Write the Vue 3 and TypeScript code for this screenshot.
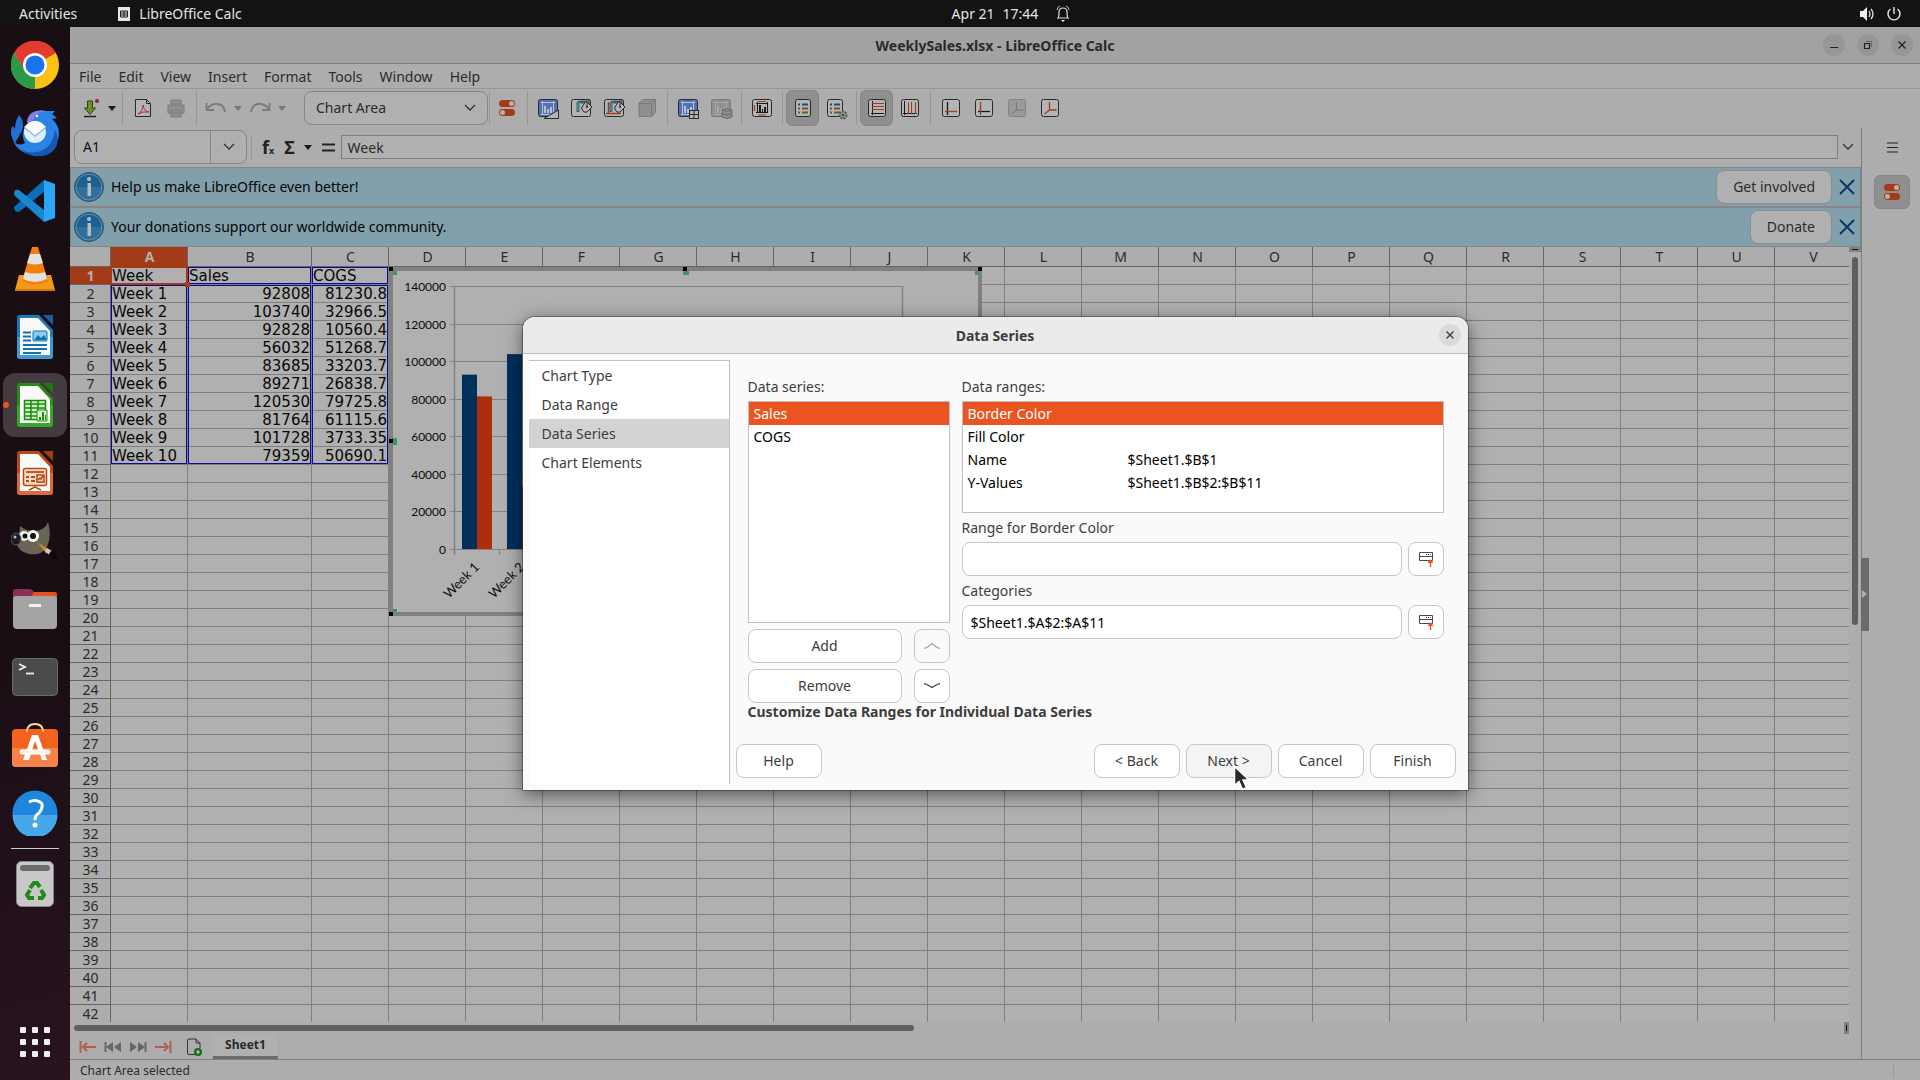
<script setup lang="ts">
import { ref } from 'vue'

interface Tool { name: string; art: string; active?: boolean }

const menus = ['File', 'Edit', 'View', 'Insert', 'Format', 'Tools', 'Window', 'Help']

const page = (x: number, w: number, fill = '#b4b4b4', stroke = '#2a2a2a') =>
  `<rect x="${x}.5" y="3.5" width="${w}" height="17" rx="2" fill="${fill}" stroke="${stroke}"/>`
const chartBars = (c: string) =>
  `<path d="M5 6.5h14M6.5 5v14M17.5 5v14M5 18.5h14" stroke="${c}" fill="none"/><path d="M8 10h2v7h-2zM11 13h2v4h-2zM14 11h2v6h-2z" fill="${c}"/>`
const bucket =
  '<path d="M9 16V8q0-2 3-2h4" fill="none" stroke="#33606f" stroke-width="3"/><path d="M9 15V8q0-1 3-1" fill="none" stroke="#6fa3b5"/><path d="M17 5l6 6-5 5q-2 1-4-1t-1-4z" fill="#b4b4b4" stroke="#2a2a2a"/><path d="M18 11V4q1-2 2 0v4" fill="none" stroke="#2a2a2a"/><circle cx="18" cy="11" r="1" fill="#2a2a2a"/>'
const listRows = (x: number) =>
  `<path d="M${x} 8.5h2m2 0h6" stroke="#0d4f8b" stroke-width="2"/><path d="M${x} 12.5h2m2 0h6" stroke="#a33a18" stroke-width="2"/><path d="M${x} 16.5h2m2 0h6" stroke="#2f7a18" stroke-width="2"/>`

const toolGroups: Tool[][] = [
  [
    { name: 'Chart Type', art: page(2, 19, '#5670b4', '#2a2a2a') + chartBars('#b8c0d4') + '<path d="M8 22.5L22.5 14v8.5z" fill="#b4b4b4" stroke="#2a2a2a"/>' },
    { name: 'Chart Area', art: page(2, 19) + bucket },
    { name: 'Chart Wall', art: page(2, 19) + '<path d="M6.5 6v12M4 17.5h15" stroke="#a33a18" stroke-width="1.5" fill="none"/>' + bucket },
    { name: '3D View', art: '<path d="M4 7l4-3.5h12.5V16L17 20.5H4z" fill="#8f8f8f" stroke="#7a7a7a"/><path d="M4 7.5h12.5V20M16.5 7.5l4-4" fill="none" stroke="#7a7a7a"/>' },
  ],
  [
    { name: 'Data Ranges', art: page(2, 19, '#5670b4') + chartBars('#b8c0d4') + '<rect x="13.5" y="14.5" width="9" height="8" fill="#b4b4b4" stroke="#2a2a2a"/><path d="M13 18.5h10M18 14v9" stroke="#2a2a2a"/>' },
    { name: 'Data Table', art: page(2, 19, '#8f8f8f', '#7a7a7a') + chartBars('#a8a8a8') + '<path d="M13 14q5-3 10 0v7q-5 3-10 0z" fill="#8f8f8f" stroke="#6c6c6c"/><path d="M13 14q5 3 10 0M13 17.5q5 3 10 0" fill="none" stroke="#6c6c6c"/>' },
  ],
  [
    { name: 'Titles', art: page(2, 19) + '<path d="M8 5.5h8M8 19h8M4.5 9v6" stroke="#a33a18" stroke-width="1.2" fill="none"/><path d="M6 7.5h12M7.5 6v11M17.5 6v11M6 16.500h12" stroke="#1a1a1a" fill="none"/><path d="M9 9h2v7H9zM12 13h1v3h-1zM14 11h2v5h-2z" fill="#1a1a1a"/>' },
  ],
  [
    { name: 'Legend', active: true, art: page(4, 15) + listRows(7) },
    { name: 'Insert Legend', art: page(3, 15) + listRows(6) + '<circle cx="19" cy="19" r="3.5" fill="#8f8f8f" stroke="#5a5a5a" stroke-width="2" stroke-dasharray="2 1"/><circle cx="19" cy="19" r="1" fill="#2a2a2a"/>' },
  ],
  [
    { name: 'Horizontal Grids', active: true, art: page(3, 17) + '<path d="M7.5 5v14M6 17.5h13" stroke="#1a1a1a" fill="none"/><path d="M7 7.5h12M7 10.5h12M7 13.5h12" stroke="#a33a18"/>' },
    { name: 'Vertical Grids', art: page(3, 17) + '<path d="M6.5 5v14M5 17.5h14" stroke="#1a1a1a" fill="none"/><path d="M10.5 6v12M13.5 6v12M17.5 6v12" stroke="#a33a18"/>' },
  ],
  [
    { name: 'X Axis', art: page(3, 17) + '<path d="M8.5 6v13" stroke="#1a1a1a" stroke-width="1.3"/><path d="M6 15.5h12" stroke="#a33a18" stroke-width="1.3"/>' },
    { name: 'Y Axis', art: page(3, 17) + '<path d="M6 15.5h12" stroke="#1a1a1a" stroke-width="1.3"/><path d="M8.5 6v13" stroke="#a33a18" stroke-width="1.3"/>' },
    { name: 'Z Axis', art: page(3, 17, '#999', '#828282') + '<path d="M11.5 6v8h7M11.5 14l-5 4" stroke="#787878" fill="none"/>' },
    { name: 'All Axes', art: page(3, 17) + '<path d="M11.5 6v8h7M11.5 14l-5 4" stroke="#a33a18" fill="none" stroke-width="1.3"/>' },
  ],
]

const columns = 'ABCDEFGHIJKLMNOPQRSTUV'.split('')
const weekly: [string, string, string][] = [
  ['Week', 'Sales', 'COGS'],
  ['Week 1', '92808', '81230.8'],
  ['Week 2', '103740', '32966.5'],
  ['Week 3', '92828', '10560.4'],
  ['Week 4', '56032', '51268.7'],
  ['Week 5', '83685', '33203.7'],
  ['Week 6', '89271', '26838.7'],
  ['Week 7', '120530', '79725.8'],
  ['Week 8', '81764', '61115.6'],
  ['Week 9', '101728', '3733.35'],
  ['Week 10', '79359', '50690.1'],
]
const cell = (row: number, col: number) => (col < 3 ? weekly[row - 1]?.[col] ?? '' : '')

const base = 278
const plotHeight = 263
const valueY = (v: number) => base - (v / 140000) * plotHeight
const bars = weekly.slice(1).map((r, i) => ({
  label: r[0], x: 73 + i * 45, sales: valueY(Number(r[1])), cogs: valueY(Number(r[2])),
}))
const axis = [0, 20000, 40000, 60000, 80000, 100000, 120000, 140000]

const steps = ['Chart Type', 'Data Range', 'Data Series', 'Chart Elements']
const ranges = [
  ['Border Color', ''],
  ['Fill Color', ''],
  ['Name', '$Sheet1.$B$1'],
  ['Y-Values', '$Sheet1.$B$2:$B$11'],
]

const formula = ref('Week')
const nameBox = ref('A1')
const borderRange = ref('')
const categories = ref('$Sheet1.$A$2:$A$11')
</script>

<template>
  <div class="desktop">
    <header class="topbar">
      <div class="tb-left">
        <button class="plain">Activities</button>
        <button class="plain app">
          <svg width="14" height="16" viewBox="0 0 14 16"><path d="M1 1h12v14H1z" fill="#e6e6e6" /><path d="M3.500 5h7v6h-7zM3.500 7h7M3.500 9h7M7 5v6" fill="none" stroke="#222" /></svg>
          LibreOffice Calc
        </button>
      </div>
      <div class="tb-mid">
        <span>Apr 21</span><span>17:44</span>
        <svg width="14" height="18" viewBox="0 0 14 18"><path d="M2 13q1-1 1-6 0-4 4-4t4 4q0 5 1 6z" fill="none" stroke="#ddd" stroke-width="1.200" /><path d="M1 5q0-3 3-4M13 5q0-3-3-4" fill="none" stroke="#bbb" /><path d="M5 15h4l-2 2z" fill="#eee" /></svg>
      </div>
      <div class="tb-right">
        <svg width="16" height="16" viewBox="0 0 16 16"><path d="M1 5h3l4-4v14l-4-4H1z" fill="#f0f0f0" /><path d="M10 5q2 3 0 6M12 3q4 5 0 10" fill="none" stroke="#e0e0e0" stroke-width="1.300" /></svg>
        <svg width="16" height="16" viewBox="0 0 16 16"><path d="M8 1v7M4.500 3a6 6 0 1 0 7 0" fill="none" stroke="#e8e8e8" stroke-width="1.400" /></svg>
      </div>
    </header>

    <div class="below">
      <nav class="dock" aria-label="Dock">
        <button class="slot" aria-label="Chrome">
          <svg width="48" height="48" viewBox="0 0 48 48"><circle cx="24" cy="24" r="24" fill="#fbc116" /><path d="M24 24L3.200 12A24 24 0 0 1 44.800 12z" fill="#e33b2e" /><path d="M24 12h20.800A24 24 0 0 0 3.200 12L13 29z" fill="#e33b2e" /><path d="M3.200 12L14 30l11 5-1 13A24 24 0 0 1 3.200 12z" fill="#2a9a48" /><path d="M24 48l10.400-18L24 35z" fill="#fbc116" /><circle cx="24" cy="24" r="12" fill="#fff" /><circle cx="24" cy="24" r="9.500" fill="#1a73e8" /></svg>
        </button>
        <button class="slot" aria-label="Thunderbird">
          <svg width="48" height="48" viewBox="0 0 48 48"><path d="M8 6C12 10 13 16 11 22L4 34C-2 26 0 18 2 17l2 3Q4 12 8 6z" fill="#2270d2" /><path d="M16 14C16 4 24 0 34 2h10l-3 3 5 4-5 1q7 6 7 15A24 23 0 0 1 2 32Q8 38 14 34 8 22 18 14z" fill="#2b83ea" /><path d="M2 30Q10 46 26 43 42 40 44 20q8 18-8 26Q14 52 2 30z" fill="#1657b0" /><path d="M16 14C17 3 26 0 36 2q-11 1-14 9z" fill="#8d7be8" /><circle cx="24" cy="23" r="11" fill="#dff0ff" /><path d="M13 18q11-12 22 0l-11 9z" fill="#fff" /><path d="M14 19l10 8 10-8" fill="none" stroke="#8bbfe8" stroke-width="1.500" /><circle cx="26" cy="7" r="1.200" fill="#fff" /></svg>
        </button>
        <button class="slot" aria-label="Visual Studio Code">
          <svg width="44" height="44" viewBox="0 0 44 44"><path d="M1 28L31 1v12L6 33q-5 0-5-5z" fill="#0a6fb8" /><path d="M1 15q0-5 5-4l25 20v12L2 17z" fill="#1687d0" /><path d="M31 1l11 4v34l-11 4z" fill="#2ba5f4" /></svg>
        </button>
        <button class="slot" aria-label="VLC">
          <svg width="42" height="48" viewBox="0 0 42 48"><path d="M5 30h32l4 15H1z" fill="#f39a1b" /><path d="M1 44h40v2H1z" fill="#d97706" /><path d="M18 2h6l10 34q-13 7-26 0z" fill="#f47d0b" /><path d="M16 9h10l3 9q-8 3-16 0zM11 27q10 3 20 0l2 7q-12 6-24 0z" fill="#e2e2e2" /></svg>
        </button>
        <button class="slot" aria-label="LibreOffice Writer">
          <svg width="38" height="46" viewBox="0 0 38 46"><path d="M4 1h19l14 15v26q0 3-3 3H4q-3 0-3-3V4q0-3 3-3z" fill="#1a7bb8" /><path d="M1 23h36v19q0 3-3 3H4q-3 0-3-3z" fill="#3e9bd0" /><path d="M4 4h18l12 13v24H4z" fill="#fafafa" /><path d="M27 1h10v10z" fill="#12639a" /><path d="M7 18.500h8M7 22.500h8M7 26.500h8M7 31h24M7 35h24M7 39h18" stroke="#0f73b0" stroke-width="2" /><rect x="17" y="17" width="14" height="10" rx="1" fill="#8ccaf0" stroke="#0f73b0" /><path d="M18 26l4-5 3 3 3-3 3 5z" fill="#0f73b0" /></svg>
        </button>
        <button class="slot current" aria-label="LibreOffice Calc">
          <i class="dot"></i>
          <svg width="38" height="46" viewBox="0 0 38 46"><path d="M4 1h19l14 15v26q0 3-3 3H4q-3 0-3-3V4q0-3 3-3z" fill="#258e14" /><path d="M1 23h36v19q0 3-3 3H4q-3 0-3-3z" fill="#35a825" /><path d="M4 4h18l12 13v24H4z" fill="#fafafa" /><path d="M27 1h10v10z" fill="#1c7a0c" /><path d="M8 18h22v20H8z" fill="#ccf0c0" /><path d="M8.500 18.500h21v19h-21zM8 22h22M8 26h22M8 30h22M8 34h22M15 18v20M22 18v20" fill="none" stroke="#1f8a10" stroke-width="1.500" /><path d="M21 28h10v11H21z" fill="#d8f4d0" stroke="#1f8a10" /><path d="M23 35h2v3h-2zM26 30h2v8h-2zM29 33h1v5h-1z" fill="#1f8a10" /></svg>
        </button>
        <button class="slot" aria-label="LibreOffice Impress">
          <svg width="38" height="46" viewBox="0 0 38 46"><path d="M4 1h19l14 15v26q0 3-3 3H4q-3 0-3-3V4q0-3 3-3z" fill="#bb4a10" /><path d="M1 23h36v19q0 3-3 3H4q-3 0-3-3z" fill="#dd6b35" /><path d="M4 4h18l12 13v24H4z" fill="#fafafa" /><path d="M27 1h10v10z" fill="#a53d08" /><rect x="7.500" y="18.500" width="23" height="17" rx="2" fill="#fbdccb" stroke="#b04a14" stroke-width="1.500" /><path d="M10 22h18" stroke="#c85a20" stroke-width="2" /><path d="M10 27h3m2 0h4M10 31h3m2 0h4" stroke="#b04a14" stroke-width="2" /><path d="M21 25h7v7h-7zM22 30l2-2 1 1 2-3M19 36v2M13 40l6-3 6 3" fill="none" stroke="#b04a14" stroke-width="1.500" /></svg>
        </button>
        <button class="slot" aria-label="GIMP">
          <svg width="48" height="40" viewBox="0 0 48 40"><path d="M9 5q7 6 16 5Q34 9 37 1q4 14-1 25-6 9-18 7Q7 31 4 19q5-3 5-14z" fill="#6b6556" /><circle cx="13" cy="15" r="5" fill="#eee" /><circle cx="22" cy="15" r="6" fill="#f4f4f4" /><circle cx="14" cy="15" r="2.500" fill="#111" /><circle cx="22" cy="15" r="3" fill="#111" /><ellipse cx="5" cy="18" rx="5" ry="6" fill="#1a1d22" stroke="#555c66" /><circle cx="4" cy="16" r="1.500" fill="#b8c0cc" /><path d="M27 22l10 6-2 4z" fill="#ea8a1b" /><path d="M36 27l5 3-2 4-5-3z" fill="#c8c8c8" /><path d="M40 30q8 2 7 9-6 0-9-6z" fill="#0a0a0a" /></svg>
        </button>
        <button class="slot" aria-label="Files">
          <svg width="46" height="42" viewBox="0 0 46 42"><path d="M1 12V4q0-3 3-3h14q2 0 4 3h20q3 0 3 3v6z" fill="#8a2f55" /><path d="M22 4h20q3 0 3 3v6H16z" fill="#e4531f" /><path d="M4 8h38q3 0 3 3v26q0 4-4 4H5q-4 0-4-4V11q0-3 3-3z" fill="#a4a4a4" /><path d="M17 16h12v3H17z" fill="#f4f4f4" /></svg>
        </button>
        <button class="slot" aria-label="Terminal">
          <svg width="46" height="38" viewBox="0 0 46 38"><rect x=".5" y=".5" width="45" height="37" rx="4" fill="#4b4b4b" stroke="#6a6a6a" /><path d="M7 6l6 3-6 3" fill="none" stroke="#eee" stroke-width="1.800" /><path d="M14 15.500h8" stroke="#eee" stroke-width="1.800" /></svg>
        </button>
        <button class="slot" aria-label="Ubuntu Software">
          <svg width="46" height="46" viewBox="0 0 46 46"><path d="M15 10q0-8 8-8t8 8" fill="none" stroke="#f5d9a0" stroke-width="2" /><rect y="7" width="46" height="38" rx="4" fill="#f4621f" /><path d="M0 26h46v15q0 4-4 4H4q-4 0-4-4z" fill="#f6834a" /><path d="M15 7v3M31 7v3" stroke="#f5d9a0" stroke-width="1.500" /><path d="M20 13h6l9 25h-5l-7-19-6 19h-6z" fill="#fff" /><path d="M10 30h26" stroke="#fff" stroke-width="5" stroke-linecap="round" /><path d="M10 30h26" stroke="#ffd9c8" /></svg>
        </button>
        <button class="slot" aria-label="Help">
          <svg width="46" height="46" viewBox="0 0 46 46"><circle cx="23" cy="23" r="22.500" fill="#1e86dc" /><path d="M.5 25h45A22.500 22.500 0 0 1 .5 25z" fill="#46a8e8" /><path d="M17 12q6-3 11 0t-1 11q-4 2-4 7" fill="none" stroke="#fff" stroke-width="3" /><circle cx="23" cy="35" r="2.500" fill="#fff" /></svg>
        </button>
        <hr />
        <button class="slot" aria-label="Trash">
          <svg width="38" height="46" viewBox="0 0 38 46"><rect x=".5" y=".5" width="37" height="45" rx="5" fill="#c8c8c8" stroke="#888" /><rect x="4" y="4" width="30" height="6" rx="3" fill="#6c6c6c" /><g fill="none" stroke="#218a1c" stroke-width="4"><path d="M14 27l4-5h3l3 4" /><path d="M25 29l3 5-2 3h-4" /><path d="M18 37h-5l-2-3 3-5" /></g></svg>
        </button>
        <button class="slot apps" aria-label="Show Applications">
          <svg width="32" height="32" viewBox="0 0 32 32" fill="#eee"><g v-for="r in 3" :key="r"><rect v-for="c in 3" :key="c" :x="c * 12 - 11" :y="r * 12 - 11" width="6" height="6" rx="1" /></g></svg>
        </button>
      </nav>

      <main class="window">
        <div class="titlebar">
          <h1>WeeklySales.xlsx - LibreOffice Calc</h1>
          <div class="winbtns">
            <button class="round" aria-label="Minimize"><svg width="10" height="10" viewBox="0 0 10 10"><path d="M1 7.500h8" stroke="#222" /></svg></button>
            <button class="round" aria-label="Restore"><svg width="10" height="10" viewBox="0 0 10 10"><path d="M1.500 3.500h5v5h-5z" fill="none" stroke="#222" stroke-width="1.200" /><path d="M3 1.500h5.500V7" fill="none" stroke="#666" /></svg></button>
            <button class="round" aria-label="Close"><svg width="10" height="10" viewBox="0 0 10 10"><path d="M1.500 1.500l7 7m0-7l-7 7" stroke="#222" stroke-width="1.200" /></svg></button>
          </div>
        </div>

        <nav class="menubar"><a v-for="m in menus" :key="m" href="#">{{ m }}</a></nav>

        <div class="toolbar">
          <button class="split" aria-label="Save">
            <svg width="24" height="24" viewBox="0 0 24 24"><path d="M9.500 5h5v7h3L12 18.500 6.500 12h3z" fill="#6d8f24" stroke="#2f4010" /><path d="M6 20.500h12" stroke="#222" stroke-width="1.500" /><circle cx="19" cy="5" r="2" fill="#9c1c2c" /></svg>
            <svg class="tri" width="8" height="5" viewBox="0 0 8 5"><path d="M0 0h8L4 5z" fill="#1a1a1a" /></svg>
          </button>
          <i class="sep"></i>
          <button class="tool" aria-label="Export as PDF"><svg width="24" height="24" viewBox="0 0 24 24"><path d="M4.500 3.500h11l4 4v13h-15z" fill="#b4b4b4" stroke="#2a2a2a" /><path d="M15.500 3.500v4h4" fill="none" stroke="#2a2a2a" /><path d="M7 18q5-3 5-9 1 6 6 7-6-1-11 2z" fill="none" stroke="#b02a3a" /></svg></button>
          <button class="tool" aria-label="Print"><svg width="24" height="24" viewBox="0 0 24 24"><path d="M7 4h10v4H7zM4 9h16v8H4zM7 14h10v7H7z" fill="#8f8f8f" stroke="#7a7a7a" /></svg></button>
          <i class="sep"></i>
          <button v-for="u in ['Undo', 'Redo']" :key="u" class="split" :aria-label="u">
            <svg v-if="u === 'Undo'" width="24" height="24" viewBox="0 0 24 24"><path d="M2.500 7v7H10M3 13q5-6 11-5 6 1 7 8" fill="none" stroke="#7a7a7a" stroke-width="1.800" /></svg>
            <svg v-else width="24" height="24" viewBox="0 0 24 24"><path d="M21.500 7v7H14M21 13q-5-6-11-5-6 1-7 8" fill="none" stroke="#7a7a7a" stroke-width="1.800" /></svg>
            <svg class="tri" width="8" height="5" viewBox="0 0 8 5"><path d="M0 0h8L4 5z" fill="#777" /></svg>
          </button>
          <span class="selwrap">
            <select aria-label="Chart element"><option>Chart Area</option></select>
            <svg width="12" height="8" viewBox="0 0 12 8"><path d="M1 1l5 5 5-5" fill="none" stroke="#333" stroke-width="1.300" /></svg>
          </span>
          <i class="sep tight"></i>
          <button class="tool" aria-label="Format Selection"><svg width="24" height="24" viewBox="0 0 24 24"><rect x="4" y="4" width="16" height="7" rx="3.500" fill="#a33a18" /><circle cx="16.500" cy="7.500" r="2.500" fill="#b8b0ac" /><rect x="4" y="13" width="16" height="7" rx="3.500" fill="#a33a18" /><circle cx="7.500" cy="16.500" r="2.500" fill="#b8b0ac" /></svg></button>
          <template v-for="(g, i) in toolGroups" :key="i">
            <i class="sep"></i>
            <button v-for="t in g" :key="t.name" class="tool" :class="{ on: t.active }" :aria-label="t.name"><svg width="24" height="24" viewBox="0 0 24 24" v-html="t.art"></svg></button>
          </template>
        </div>

        <div class="work">
          <div class="doc">
            <div class="formulabar">
              <div class="namebox">
                <input v-model="nameBox" aria-label="Name Box" />
                <button aria-label="Open name list"><svg width="12" height="8" viewBox="0 0 12 8"><path d="M1 1l5 5 5-5" fill="none" stroke="#333" stroke-width="1.300" /></svg></button>
              </div>
              <i class="vline"></i>
              <button class="fx" aria-label="Function Wizard">f<small>x</small></button>
              <button class="fx sigma" aria-label="Select Function">Σ<svg width="8" height="5" viewBox="0 0 8 5"><path d="M0 0h8L4 5z" fill="#1a1a1a" /></svg></button>
              <button class="fx" aria-label="Formula"><svg width="13" height="9" viewBox="0 0 13 9"><path d="M0 1.500h13M0 7.500h13" stroke="#222" stroke-width="2" /></svg></button>
              <input v-model="formula" class="formula" aria-label="Input line" />
              <button class="expand" aria-label="Expand Formula Bar"><svg width="12" height="8" viewBox="0 0 12 8"><path d="M1 1l5 5 5-5" fill="none" stroke="#333" stroke-width="1.300" /></svg></button>
            </div>

            <div v-for="b in [['Help us make LibreOffice even better!', 'Get involved'], ['Your donations support our worldwide community.', 'Donate']]" :key="b[1]" class="infobar">
              <svg width="30" height="30" viewBox="0 0 30 30"><circle cx="15" cy="15" r="14.500" fill="#1d5f90" stroke="#3f4f58" /><path d="M1.500 15h27a13.500 13.500 0 0 1-27 0z" fill="#2f709d" /><circle cx="15" cy="15" r="13" fill="none" stroke="#5c93b5" /><path d="M13.500 11h3.500v13h-3.500z" fill="#b4bcc2" /><circle cx="15" cy="7" r="2" fill="#b4bcc2" /></svg>
              <span>{{ b[0] }}</span>
              <button class="infobtn">{{ b[1] }}</button>
              <button class="infox" aria-label="Close Infobar"><svg width="16" height="16" viewBox="0 0 16 16"><path d="M1 1l14 14m0-14L1 15" stroke="#083761" stroke-width="2" /></svg></button>
            </div>

            <div class="sheetrow">
              <div class="sheet">
                <table>
                  <colgroup><col class="c-head" /><col v-for="c in columns" :key="c" :class="{ 'c-wide': c === 'B' }" class="c-std" /></colgroup>
                  <thead><tr><th></th><th v-for="c in columns" :key="c" :class="{ hot: c === 'A' }">{{ c }}</th></tr></thead>
                  <tbody>
                    <tr v-for="r in 42" :key="r">
                      <th :class="{ hot: r === 1 }">{{ r }}</th>
                      <td v-for="(c, i) in columns" :key="c" :class="{ num: r > 1 && i > 0 }">{{ cell(r, i) }}</td>
                    </tr>
                  </tbody>
                </table>
                <i class="range ra"></i><i class="range rb"></i><i class="range rc"></i><i class="range hb"></i><i class="range hc"></i>
                <i class="cursorcell"></i>
                <div class="chart">
                  <svg width="585" height="341" viewBox="0 0 585 341">
                    <g stroke="#828282">
                      <path v-for="(a, i) in axis" :key="a" :d="`M57 ${Math.round(valueY(a)) + 0.5}H510`" />
                      <path d="M61.500 15v269M509.500 15v264" stroke-width="1.500" fill="none" />
                      <path v-for="b in bars" :key="b.label" :d="`M${b.x + 33.5} 279v5`" />
                    </g>
                    <g class="axis"><text v-for="a in axis" :key="a" x="53" :y="valueY(a) + 5" text-anchor="end">{{ a }}</text></g>
                    <g v-for="b in bars" :key="b.label">
                      <rect :x="b.x - 4" :y="b.sales" width="15" :height="278 - b.sales" fill="#002f5c" />
                      <rect :x="b.x + 11" :y="b.cogs" width="15" :height="278 - b.cogs" fill="#ae2d0b" />
                      <text class="week" :transform="`translate(${b.x + 14} 297) rotate(-45)`" text-anchor="end">{{ b.label }}</text>
                    </g>
                  </svg>
                  <b class="h h1"></b><b class="h h2"></b><b class="h h3"></b><b class="h h4"></b><b class="h h5"></b>
                </div>
              </div>
              <div class="vscroll"><i class="splitbox"></i><i class="vthumb"></i></div>
            </div>

            <div class="hscroll"><i class="hthumb"></i><i class="hsplit"></i></div>
            <div class="tabs">
              <button aria-label="First Sheet"><svg width="18" height="14" viewBox="0 0 18 14"><path d="M1.500 1v12M4 7h13M8 3L4 7l4 4" fill="none" stroke="#b0604a" stroke-width="2" /></svg></button>
              <button aria-label="Previous Sheet"><svg width="18" height="14" viewBox="0 0 18 14"><path d="M1.500 2v10" stroke="#666" stroke-width="2" /><path d="M9 2v10L2 7zM17 2v10L10 7z" fill="#666" /></svg></button>
              <button aria-label="Next Sheet"><svg width="18" height="14" viewBox="0 0 18 14"><path d="M16.500 2v10" stroke="#666" stroke-width="2" /><path d="M9 2v10l7-5zM1 2v10l7-5z" fill="#666" /></svg></button>
              <button aria-label="Last Sheet"><svg width="18" height="14" viewBox="0 0 18 14"><path d="M16.500 1v12M14 7H1M10 3l4 4-4 4" fill="none" stroke="#b0604a" stroke-width="2" /></svg></button>
              <button class="addsheet" aria-label="Add Sheet"><svg width="16" height="18" viewBox="0 0 16 18"><path d="M9 16.500H3q-1.500 0-1.500-1.500V2.500Q1.500 1 3 1h7l4 4v5" fill="none" stroke="#333" /><path d="M10 1v4h4" fill="none" stroke="#333" /><circle cx="12" cy="14" r="4" fill="#136b1c" /><path d="M12 12v4m-2-2h4" stroke="#ccc" stroke-width="1.200" /></svg></button>
              <button class="tab">Sheet1</button>
            </div>
          </div>

          <aside class="side">
            <button class="burger" aria-label="Sidebar Settings"><svg width="11" height="11" viewBox="0 0 11 11"><path d="M0 1h11M0 5.500h11M0 10h11" stroke="#222" stroke-width="1.200" /></svg></button>
            <button class="props" aria-label="Properties"><svg width="24" height="24" viewBox="0 0 24 24"><rect x="4" y="4" width="16" height="7" rx="3.500" fill="#a33a18" /><circle cx="16.500" cy="7.500" r="2.500" fill="#b8b0ac" /><rect x="4" y="13" width="16" height="7" rx="3.500" fill="#a33a18" /><circle cx="7.500" cy="16.500" r="2.500" fill="#b8b0ac" /></svg></button>
            <button class="grab" aria-label="Hide Sidebar"><svg width="5" height="8" viewBox="0 0 5 8"><path d="M0 0l5 4-5 4z" fill="#b0b0b0" /></svg></button>
          </aside>
        </div>

        <footer class="status"><span>Chart Area selected</span><i></i></footer>

        <div class="modal">
          <section class="dialog" role="dialog" aria-labelledby="dlg-title">
            <header>
              <h2 id="dlg-title">Data Series</h2>
              <button class="round" aria-label="Close dialog"><svg width="10" height="10" viewBox="0 0 10 10"><path d="M1.500 1.500l7 7m0-7l-7 7" stroke="#3d3d3d" stroke-width="1.400" /></svg></button>
            </header>
            <div class="dbody">
              <nav class="steps"><button v-for="s in steps" :key="s" :class="{ sel: s === 'Data Series' }">{{ s }}</button></nav>
              <div class="dmain">
                <div class="fields">
                  <div class="colseries">
                    <p id="ser-label">Data series:</p>
                    <ul class="list" role="listbox" aria-labelledby="ser-label">
                      <li role="option" aria-selected="true" class="sel">Sales</li>
                      <li role="option" aria-selected="false">COGS</li>
                    </ul>
                    <div class="pair">
                      <button class="btn">Add</button>
                      <button class="btn sq" disabled aria-label="Move up"><svg width="16" height="8" viewBox="0 0 16 8"><path d="M0 6.500l3-1 5-4 5 4 3 1" fill="none" stroke="#a0a0a0" stroke-width="1.200" /></svg></button>
                    </div>
                    <div class="pair">
                      <button class="btn">Remove</button>
                      <button class="btn sq" aria-label="Move down"><svg width="16" height="8" viewBox="0 0 16 8"><path d="M0 1.500l3 1 5 3 5-3 3-1" fill="none" stroke="#3d3d3d" stroke-width="1.200" /></svg></button>
                    </div>
                  </div>
                  <div class="colranges">
                    <p id="rng-label">Data ranges:</p>
                    <div class="list rangebox">
                      <table aria-labelledby="rng-label"><tbody><tr v-for="(r, i) in ranges" :key="r[0]" :class="{ sel: i === 0 }"><td>{{ r[0] }}</td><td>{{ r[1] }}</td></tr></tbody></table>
                    </div>
                    <label for="border-range">Range for Border Color</label>
                    <div class="entry">
                      <input id="border-range" v-model="borderRange" />
                      <button class="btn" aria-label="Select border range"><svg width="16" height="18" viewBox="0 0 16 18"><path d="M1.500 2.500h13v8h-13zM1.500 6.500h13" fill="none" stroke="#4a4a4a" /><path d="M8 4.500h1m1 0h1" stroke="#222" /><path d="M12 4.500h1" stroke="#e95420" /><path d="M12.500 17v-5" stroke="#e95420" stroke-width="1.400" /><path d="M9.500 13l3-4 3 4z" fill="#e95420" /></svg></button>
                    </div>
                    <label for="categories">Categories</label>
                    <div class="entry">
                      <input id="categories" v-model="categories" />
                      <button class="btn" aria-label="Select categories"><svg width="16" height="18" viewBox="0 0 16 18"><path d="M1.500 2.500h13v8h-13zM1.500 6.500h13" fill="none" stroke="#4a4a4a" /><path d="M8 4.500h1m1 0h1" stroke="#222" /><path d="M12 4.500h1" stroke="#e95420" /><path d="M12.500 17v-5" stroke="#e95420" stroke-width="1.400" /><path d="M9.500 13l3-4 3 4z" fill="#e95420" /></svg></button>
                    </div>
                  </div>
                </div>
                <h3>Customize Data Ranges for Individual Data Series</h3>
                <div class="actions">
                  <button class="btn">Help</button>
                  <span class="grow"></span>
                  <button class="btn">&lt; Back</button>
                  <button class="btn hover">Next &gt;<svg class="pointer" width="18" height="26" viewBox="0 0 18 26"><path d="M1.500 1.500v19l4.500-4 3.500 8 4-2-3.500-7.500h6z" fill="#2a2a2a" stroke="#fff" stroke-width="1.500" /></svg></button>
                  <button class="btn">Cancel</button>
                  <button class="btn">Finish</button>
                </div>
              </div>
            </div>
          </section>
        </div>
      </main>
    </div>
  </div>
</template>

<style>
body { margin: 0; background: #adadad; overflow: hidden; }
</style>

<style scoped>
* { box-sizing: border-box; }
.desktop { height: 100vh; display: flex; flex-direction: column; font: 14px/20px "Noto Sans", "Open Sans", sans-serif; color: #2b2b2b; overflow: hidden; }
button, input, select { font: inherit; color: inherit; margin: 0; padding: 0; border: 0; background: none; outline: 0; }
svg { display: block; flex: none; }
h1, h2, h3, p, ul { margin: 0; padding: 0; font-size: inherit; list-style: none; }

.topbar { height: 27px; flex: none; background: #131313; color: #e4e4e4; display: grid; grid-template-columns: 1fr auto 1fr; align-items: center; }
.tb-left { display: flex; gap: 40px; padding-left: 19px; }
.app { display: flex; align-items: center; gap: 8px; }
.tb-mid { display: flex; align-items: center; gap: 8px; margin-left: 102px; }
.tb-mid svg { margin-left: 10px; }
.tb-right { display: flex; justify-content: flex-end; gap: 11px; padding-right: 18px; }

.below { flex: 1; min-height: 0; display: flex; }
.dock { width: 70px; flex: none; background: linear-gradient(165deg, #1a0e15 60%, #28131f); padding: 4px 3px; display: flex; flex-direction: column; }
.slot { height: 68px; flex: none; display: flex; align-items: center; justify-content: center; position: relative; }
.current { height: 64px; margin: 2px 0; border-radius: 12px; background: #443b41; }
.dot { position: absolute; left: 0; top: 29px; width: 6px; height: 6px; border-radius: 50%; background: #e95420; }
.dock hr { width: 48px; height: 1px; flex: none; border: 0; background: #d0ccce; margin: 1px auto; }
.apps { margin-top: auto; }

.window { flex: 1; min-width: 0; display: flex; flex-direction: column; background: #adadad; position: relative; }
.titlebar { height: 37px; flex: none; background: #a2a2a2; border-bottom: 1px solid #7f7f7f; display: flex; align-items: center; justify-content: center; position: relative; }
.titlebar h1 { font-weight: 700; line-height: 22px; padding-top: 2px; }
.winbtns { position: absolute; right: 7px; display: flex; gap: 12px; }
.round { width: 22px; height: 22px; border-radius: 50%; background: #969696; display: flex; align-items: center; justify-content: center; }
.menubar { height: 25px; flex: none; border-bottom: 1px solid #989898; display: flex; align-items: center; gap: 17px; padding: 2px 0 0 9px; }
.menubar a { color: inherit; text-decoration: none; }

.toolbar { height: 39px; flex: none; display: flex; align-items: center; padding: 0 0 1px 4px; }
.tool { width: 33px; height: 36px; display: flex; align-items: center; justify-content: center; border-radius: 6px; }
.tool.on { background: #8f8f8f; border: 1px solid #868686; }
.split { width: 44px; height: 36px; display: flex; align-items: center; gap: 6px; padding-left: 4px; }
.sep { width: 1px; height: 34px; background: #989898; margin: 0 3px 0 4px; }
.sep.tight { margin: 0 0 0 1px; }
.selwrap { display: grid; align-items: center; width: 184px; margin-left: 16px; }
.selwrap > * { grid-area: 1 / 1; }
.selwrap select { appearance: none; height: 34px; border: 1px solid #858585; border-radius: 8px; padding: 0 11px; background: #b0b0b0; }
.selwrap svg { justify-self: end; margin-right: 12px; }

.work { flex: 1; min-height: 0; display: flex; }
.doc { flex: 1; min-width: 0; display: flex; flex-direction: column; }
.formulabar { height: 39px; flex: none; display: flex; align-items: center; padding: 0 7px 1px 4px; }
.namebox { width: 173px; height: 34px; border: 1px solid #858585; border-radius: 8px; background: #b0b0b0; display: flex; color: #111; }
.namebox input { flex: 1; min-width: 0; padding-left: 8px; }
.namebox button { width: 36px; border-left: 1px solid #858585; display: flex; align-items: center; justify-content: center; }
.vline { width: 1px; height: 25px; background: #989898; margin: 0 10px 0 4px; }
.fx { font-weight: 700; font-size: 18px; margin-right: 6px; display: flex; align-items: center; color: #222; }
.fx small { font-size: 9px; padding-top: 7px; }
.sigma { gap: 9px; margin-right: 10px; padding-left: 4px; }
.formula { flex: 1; height: 24px; border: 1px solid #7f7f7f; background: #b0b0b0; padding: 0 6px; }
.expand { width: 12px; margin-left: 4px; }

.infobar { height: 40px; flex: none; border: 1px solid #8a8583; background: #829fac; display: flex; align-items: center; padding: 0 4px 0 3px; color: #050505; }
.infobar span { flex: 1; margin-left: 7px; }
.infobtn { height: 34px; padding: 0 16px; border: 1px solid #8d8d8d; border-radius: 8px; background: #b0b0b0; color: #2b2b2b; }
.infox { width: 16px; margin: 0 1px 0 7px; }

.sheetrow { flex: 1; min-height: 0; display: flex; }
.sheet { flex: 1; min-width: 0; overflow: hidden; position: relative; background: #b0b0b0; }
.sheet table { border-collapse: separate; border-spacing: 0; table-layout: fixed; width: 1782px; }
.c-head { width: 41px; }
.c-std { width: 77px; }
.c-wide { width: 124px; }
.sheet th { height: 18px; line-height: 17px; padding: 0 0 0 1px; background: #adadad; font-weight: 400; border: solid #656565; border-width: 0 1px 1px 0; overflow: hidden; }
.sheet thead th { height: 20px; line-height: 19px; }
.sheet td { height: 18px; line-height: 16px; padding: 1px 1px 0; border: solid #808080; border-width: 0 1px 1px 0; font-family: "DejaVu Sans", sans-serif; font-size: 15px; color: #080808; overflow: hidden; white-space: nowrap; }
.sheet td.num { text-align: right; }
.sheet th.hot { background: #a33a18; color: #b8b0ac; font-weight: 700; }
.range { position: absolute; border: 1px solid #0a0a98; }
.ra { left: 41px; top: 38px; width: 76px; height: 179px; }
.rb { left: 118px; top: 38px; width: 123px; height: 179px; }
.rc { left: 242px; top: 38px; width: 76px; height: 179px; }
.hb { left: 118px; top: 20px; width: 123px; height: 17px; }
.hc { left: 242px; top: 20px; width: 76px; height: 17px; }
.cursorcell { position: absolute; left: 40px; top: 19px; width: 78px; height: 19px; border: 1px solid #a33a18; outline: 1px solid #a33a18; outline-offset: -2px; }
.cursorcell::after { content: ""; position: absolute; right: -3px; bottom: -3px; width: 5px; height: 5px; background: #a33a18; }
.chart { position: absolute; left: 319px; top: 20px; border: 4px solid #808080; background: #b0b0b0; }
.chart text { font: 12px Lato, sans-serif; fill: #0c0c0c; }
.chart .week { font-size: 13px; }
.h { position: absolute; width: 4px; height: 4px; background: #000; }
.h::after { content: ""; position: absolute; left: 4px; top: 4px; width: 4px; height: 4px; background: #3f9560; }
.h1 { left: -4px; top: -4px; }
.h2 { left: 290px; top: -4px; }
.h2::after { left: 0; width: 6px; }
.h3 { right: -4px; top: -4px; }
.h3::after { left: -3px; width: 3px; }
.h4 { left: -4px; top: 168px; }
.h4::after { top: -1px; height: 7px; }
.h5 { left: -4px; bottom: -4px; }
.h5::after { top: -3px; height: 3px; }
.vscroll { width: 12px; flex: none; display: flex; flex-direction: column; align-items: center; }
.splitbox { width: 12px; height: 5px; background: linear-gradient(#111, #111) center / 6px 1px no-repeat #808080; }
.vthumb { width: 6px; height: 368px; margin-top: 5px; border-radius: 3px; background: #5f5f5f; }
.hscroll { height: 12px; flex: none; display: flex; align-items: center; padding: 0 12px 0 4px; }
.hthumb { width: 840px; height: 6px; border-radius: 3px; background: #5f5f5f; }
.hsplit { width: 5px; height: 12px; margin-left: auto; background: linear-gradient(#111, #111) center / 1px 6px no-repeat #808080; }
.tabs { height: 25px; flex: none; display: flex; align-items: center; gap: 7px; padding-left: 9px; }
.tabs button { width: 18px; }
.tabs .addsheet { margin-left: 7px; }
.tabs .tab { width: 65px; height: 25px; margin-left: 2px; background: #b0b0b0; border-bottom: 3px solid #6b6b6b; font-size: 12px; font-weight: 700; }

.side { width: 59px; flex: none; border-left: 1px solid #7f7f7f; display: flex; flex-direction: column; align-items: center; padding-left: 2px; position: relative; }
.burger { height: 38px; }
.props { width: 36px; height: 34px; margin-top: 9px; border: 1px solid #868686; border-radius: 6px; background: #8f8f8f; display: flex; align-items: center; justify-content: center; }
.grab { position: absolute; left: -1px; top: calc(50% - 36px); width: 8px; height: 73px; background: #6b6b6b; display: flex; align-items: center; padding-left: 1px; }
.status { height: 21px; flex: none; border-top: 1px solid #7f7f7f; display: flex; align-items: center; padding: 2px 26px 0 10px; font-size: 12px; }
.status i { width: 1px; height: 13px; background: #989898; margin-left: auto; }

.modal { position: absolute; inset: 0; display: grid; place-items: center; }
.dialog { width: 945px; background: #fafafa; border-radius: 12px 12px 0 0; box-shadow: 0 0 0 1px rgba(0, 0, 0, .3), 0 4px 18px rgba(0, 0, 0, .55); color: #3d3d3d; }
.dialog > header { height: 37px; background: #ebebeb; border-bottom: 1px solid #bfbfbf; border-radius: 12px 12px 0 0; display: flex; align-items: center; justify-content: center; position: relative; }
.dialog h2 { padding-top: 2px; }
.dialog > header .round { position: absolute; right: 7px; background: #dadada; }
.dbody { display: flex; padding: 6px; }
.steps { width: 201px; flex: none; background: #fff; border: solid #c0c0c0; border-width: 1px 1px 0 0; display: flex; flex-direction: column; }
.steps button { height: 29px; padding-left: 13px; text-align: left; }
.steps .sel { background: #d3d3d3; }
.dmain { flex: 1; min-width: 0; padding: 16px 6px 6px; display: flex; flex-direction: column; }
.fields { display: flex; gap: 12px; padding: 0 12px; }
.colseries { width: 202px; display: flex; flex-direction: column; }
.colranges { flex: 1; display: flex; flex-direction: column; }
.fields p { height: 25px; line-height: 22px; }
.list { border: 1px solid #c0c0c0; background: #fff; color: #000; }
.colseries .list { height: 222px; }
.list li, .list td { height: 23px; line-height: 23px; padding: 0 5px; }
.list .sel { background: #e95420; color: #fff; }
.rangebox { height: 112px; }
.rangebox table { width: 100%; border-collapse: collapse; table-layout: fixed; }
.rangebox td:first-child { width: 160px; }
.pair { display: flex; gap: 12px; margin-top: 6px; }
.btn { height: 34px; border: 1px solid #c6c6c6; border-radius: 8px; background: #fff; color: #3d3d3d; display: flex; align-items: center; justify-content: center; }
.pair .btn { width: 154px; }
.pair .sq { width: 36px; }
.btn:disabled { background: #fafafa; }
.colranges label { height: 29px; line-height: 29px; }
.entry { display: flex; gap: 6px; }
.entry input { flex: 1; min-width: 0; height: 34px; border: 1px solid #c6c6c6; border-radius: 8px; background: #fff; color: #000; padding: 0 8px; }
.entry .btn { width: 36px; }
.dmain h3 { padding-left: 12px; height: 20px; line-height: 18px; }
.actions { display: flex; gap: 6px; margin-top: 21px; }
.actions .btn { width: 86px; position: relative; }
.actions .hover { background: #f4f4f4; }
.grow { flex: 1; }
.pointer { position: absolute; left: 46px; top: 20px; z-index: 1; }
</style>
